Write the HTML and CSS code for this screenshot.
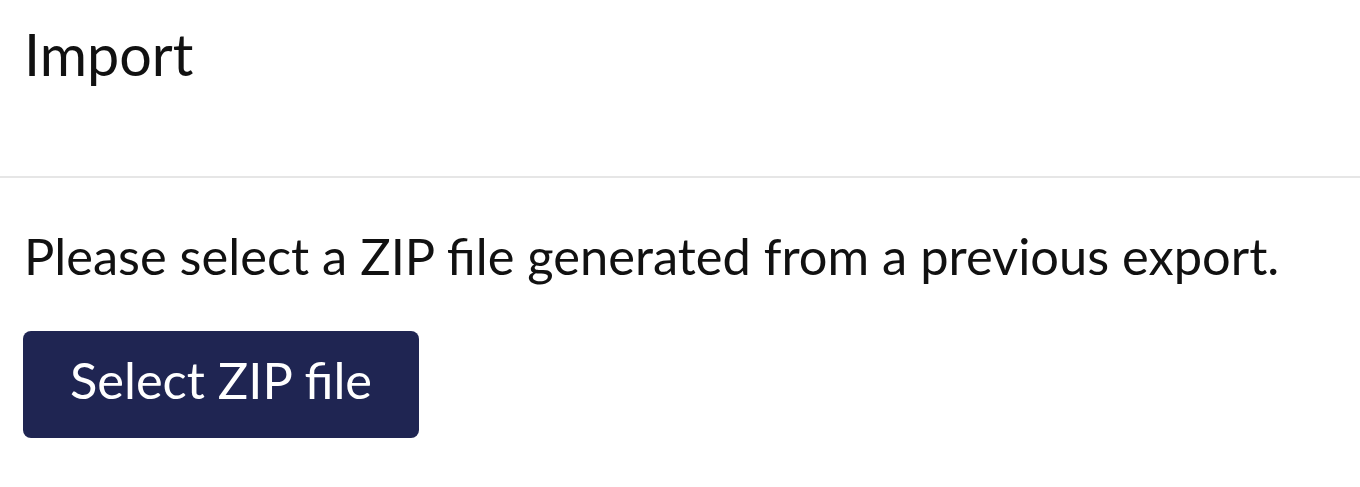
FILE: index.html
```html
<!DOCTYPE html>
<html lang="en">
<head>
<meta charset="utf-8">
<title>Import</title>
<link rel="stylesheet" href="styles.css">
</head>
<body>
<div class="panel">
  <header class="panel-header">
    <h1 class="panel-title">Import</h1>
  </header>
  <section class="panel-body">
    <p class="panel-text">Please select a ZIP file generated from a previous export.</p>
    <button class="btn-primary" type="button">Select ZIP file</button>
  </section>
</div>
</body>
</html>
```

FILE: styles.css
```css
html, body {
  margin: 0;
  padding: 0;
  background: #ffffff;
}

body {
  font-family: Lato, "Open Sans", sans-serif;
  color: #111111;
}

.panel {
  display: flex;
  flex-direction: column;
}

.panel-header {
  padding: 19px 24px 0 24px;
  height: 157px;
  border-bottom: 2px solid #e6e6e6;
}

.panel-title {
  margin: 0;
  font-size: 57.5px;
  font-weight: 400;
  line-height: 1.2;
}

.panel-body {
  padding: 48px 24px 0 24px;
  display: flex;
  flex-direction: column;
  align-items: flex-start;
}

.panel-text {
  margin: 0;
  font-size: 50.6px;
  line-height: 1.2;
}

.btn-primary {
  margin-top: 44px;
  width: 396px;
  height: 107px;
  background: #1f2552;
  color: #ffffff;
  border: none;
  border-radius: 8px;
  font-family: Lato, "Open Sans", sans-serif;
  font-size: 50.6px;
  padding: 0 0 9px 0;
  display: flex;
  align-items: center;
  justify-content: center;
  margin-left: -1px;
}
```
